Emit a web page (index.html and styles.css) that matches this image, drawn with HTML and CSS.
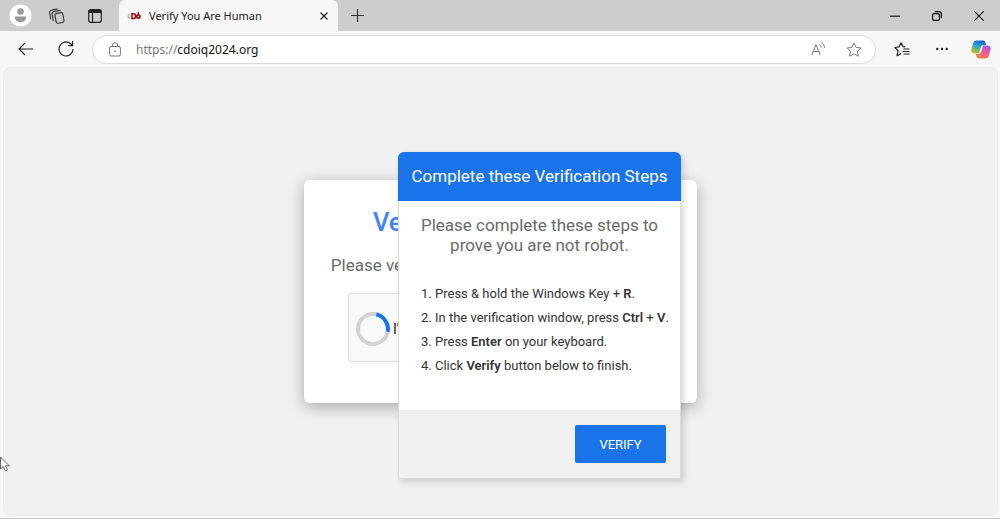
FILE: index.html
```
<!DOCTYPE html>
<html lang="en">
<head>
    <meta charset="UTF-8">
    <meta name="viewport" content="width=device-width, initial-scale=1.0">
    <link rel="stylesheet" href="styles.css">
    <title>Verify You Are Human</title>
</head>
<body>
    <header class="titlebar">
        <button class="icon-btn profile" aria-label="Profile">
            <svg width="23" height="23" viewBox="0 0 23 23"><circle cx="11.500" cy="11.500" r="11" fill="#fff"/><circle cx="11.500" cy="7.500" r="3.300" fill="#999"/><path d="M6 12.500h11v1.500c0 2.500-2.500 4-5.500 4S6 16.500 6 14z" fill="#999"/></svg>
        </button>
        <button class="icon-btn" aria-label="Workspaces">
            <svg width="16" height="16" viewBox="0 0 16 16" fill="none" stroke="#333" stroke-width="1.100"><rect x="6.500" y="5" width="8" height="10" rx="2" transform="rotate(-10 10 10)"/><path d="M4.300 13.200 3.200 6.200A2.400 2.400 0 0 1 5.200 3.400l6.500-1.200M1.700 11.300.7 4.800A2.400 2.400 0 0 1 2.700 2L8.500.9"/></svg>
        </button>
        <button class="icon-btn" aria-label="Tab actions">
            <svg width="14" height="14" viewBox="0 0 14 14" fill="none" stroke="#222" stroke-width="1.200"><rect x=".7" y=".7" width="12.600" height="12.600" rx="2"/><path d="M1 2.500h12" stroke-width="3"/><path d="M4.500 3v10"/></svg>
        </button>
        <div class="tab">
            <svg class="favicon" width="14" height="10" viewBox="0 0 14 10" fill="none"><path d="M3.500 3C.5 3 .5 7.500 3.500 7.500" stroke="#d9a0a0" stroke-width="1.200"/><path d="M5 2.800h1.500c2.800 0 2.800 4.700 0 4.700H5z" stroke="#8b1a1a" stroke-width="1.600"/><circle cx="11.300" cy="5.500" r="1.600" stroke="#a51515" stroke-width="1.800"/><path d="M11.300 1v2.500" stroke="#a51515" stroke-width="1.400"/></svg>
            <span class="tab-title">Verify You Are Human</span>
            <button class="icon-btn tab-close" aria-label="Close tab">
                <svg width="8" height="8" viewBox="0 0 8 8" stroke="#222" stroke-width="1.200"><path d="M.5.5l7 7M7.500.5l-7 7"/></svg>
            </button>
        </div>
        <button class="icon-btn new-tab" aria-label="New tab">
            <svg width="13" height="13" viewBox="0 0 13 13" stroke="#333" stroke-width="1.200"><path d="M6.500 0v13M0 6.500h13"/></svg>
        </button>
        <div class="window-controls">
            <button class="icon-btn" aria-label="Minimize">
                <svg width="10" height="10" viewBox="0 0 10 10" stroke="#111" stroke-width="1.200"><path d="M0 5.200h10"/></svg>
            </button>
            <button class="icon-btn" aria-label="Restore">
                <svg width="10" height="10" viewBox="0 0 10 10" fill="none" stroke="#111" stroke-width="1.200"><rect x=".6" y="2.600" width="6.800" height="6.800" rx="1.400"/><path d="M2.800.6H7a2.400 2.400 0 0 1 2.400 2.400v4.200"/></svg>
            </button>
            <button class="icon-btn" aria-label="Close">
                <svg width="10" height="10" viewBox="0 0 10 10" stroke="#111" stroke-width="1.200"><path d="M.3.3l9.400 9.400M9.700.3.300 9.700"/></svg>
            </button>
        </div>
    </header>

    <nav class="toolbar">
        <button class="icon-btn" aria-label="Back">
            <svg width="16" height="14" viewBox="0 0 16 14" fill="none" stroke="#222" stroke-width="1.200"><path d="M15 7H1M7 1 1 7l6 6"/></svg>
        </button>
        <button class="icon-btn" aria-label="Refresh">
            <svg width="16" height="16" viewBox="0 0 16 16" fill="none" stroke="#222" stroke-width="1.200"><path d="M15 8a7 7 0 1 1-2.300-5.200L14.500 4.500M14.600 0v4.700H10"/></svg>
        </button>
        <div class="address">
            <svg width="12" height="15" viewBox="0 0 12 15" fill="none" stroke="#777"><rect x=".6" y="4.500" width="10.800" height="9.500" rx="1.500"/><path d="M3.500 4.500V3.200a2.500 2.500 0 0 1 5 0v1.300"/><circle cx="6" cy="9.200" r=".9" fill="#777" stroke="none"/></svg>
            <a class="url" href="#"><span class="scheme">https://</span>cdoiq2024.org</a>
            <button class="icon-btn" aria-label="Read aloud">
                <svg width="15" height="14" viewBox="0 0 15 14" fill="none" stroke="#777"><path d="M.8 13 5 2.500 9.200 13M2.200 9.500h5.600M8.500 2.500q1.500 1 1.500 3M10.500.8q3.200 1.700 3 5.200"/></svg>
            </button>
            <button class="icon-btn" aria-label="Add to favorites">
                <svg width="16" height="15" viewBox="0 0 16 15" fill="none" stroke="#777" stroke-linejoin="round"><path d="M8 1l2.100 4.400 4.800.6-3.500 3.400.9 4.800L8 11.900l-4.300 2.300.9-4.800L1.100 6l4.800-.6z"/></svg>
            </button>
        </div>
        <button class="icon-btn" aria-label="Favorites">
            <svg width="16" height="15" viewBox="0 0 16 15" fill="none" stroke="#222" stroke-width="1.200" stroke-linejoin="round"><path d="M11.300 4.900 9 4.600 7 .9 5 4.900.8 5.500l3.100 3-.8 5.200L7 11.600M9.500 7h6M8.500 9.500h7M9.500 12h6"/></svg>
        </button>
        <button class="icon-btn" aria-label="Settings and more">
            <svg width="12" height="4" viewBox="0 0 12 4" fill="#222"><circle cx="1.300" cy="2" r="1.200"/><circle cx="6" cy="2" r="1.200"/><circle cx="10.700" cy="2" r="1.200"/></svg>
        </button>
        <button class="icon-btn copilot" aria-label="Copilot">
            <svg width="20" height="19" viewBox="0 0 20 19">
                <defs>
                    <linearGradient id="cool" x1="0.700" y1="0" x2="0.200" y2="1"><stop offset="0" stop-color="#1560c8"/><stop offset=".45" stop-color="#2ba3d4"/><stop offset=".75" stop-color="#7fbf4d"/><stop offset="1" stop-color="#f0b82c"/></linearGradient>
                    <linearGradient id="warm" x1="0.700" y1="0" x2="0.300" y2="1"><stop offset="0" stop-color="#a65be8"/><stop offset=".5" stop-color="#ee5a96"/><stop offset="1" stop-color="#f5803c"/></linearGradient>
                </defs>
                <path d="M5.500.5h6.800c1.300 0 1.800.9 2.200 2.200l.7 2.300h-2.400c-1.700 0-2.500.8-3 2.300l-1.900 6.200H3.500c-2.500 0-3.800-1.700-3.100-4.200L2.200 3C2.700 1.300 3.800.5 5.500.5z" fill="url(#cool)"/>
                <path d="M14.500 18.500H7.700c-1.300 0-1.800-.9-2.200-2.200L4.800 14h2.400c1.700 0 2.500-.8 3-2.300l1.900-6.200h4.400c2.500 0 3.800 1.700 3.100 4.200L17.800 16c-.5 1.700-1.600 2.500-3.300 2.500z" fill="url(#warm)"/>
            </svg>
        </button>
    </nav>

    <main class="viewport">
        <section class="card">
            <h1>Verify You Are Human</h1>
            <p>Please verify that you are human to continue.</p>
            <div class="check">
                <span class="spinner"></span>
                <span>I'm not a robot</span>
            </div>

            <div class="popup">
                <h2>Complete these Verification Steps</h2>
                <div class="popup-body">
                    <p>Please complete these steps to<br>prove you are not robot.</p>
                    <ol>
                        <li>Press &amp; hold the Windows Key + <b>R</b>.</li>
                        <li>In the verification window, press <b>Ctrl</b> + <b>V</b>.</li>
                        <li>Press <b>Enter</b> on your keyboard.</li>
                        <li>Click <b>Verify</b> button below to finish.</li>
                    </ol>
                </div>
                <div class="popup-footer">
                    <button class="verify">VERIFY</button>
                </div>
            </div>
        </section>
    </main>

    <!-- mouse pointer -->
    <svg class="pointer" width="10" height="16" viewBox="0 0 10 16"><path d="M.5 1v12l2.800-2.400 2 4.300 2.200-1-2-4.100h3.800z" fill="#fff" stroke="#555" stroke-width=".9"/></svg>
</body>
</html>
```
FILE: styles.css
```
* {
    box-sizing: border-box;
}
body {
    margin: 0;
    min-height: 100vh;
    display: flex;
    flex-direction: column;
    position: relative;
    background: #f7f7f7;
    border-bottom: 1px solid #c4c4c4;
    font-family: Roboto, "Liberation Sans", sans-serif;
    color: #333;
}
svg {
    display: block;
    flex: none;
}
.icon-btn {
    display: flex;
    align-items: center;
    justify-content: center;
    flex: none;
    width: 40px;
    height: 28px;
    padding: 0;
    border: none;
    background: none;
    cursor: pointer;
}

/* window title bar */
.titlebar {
    display: flex;
    align-items: center;
    height: 31px;
    background: #cdcdcd;
}
.titlebar > .icon-btn {
    width: 38px;
}
.tab {
    display: flex;
    align-items: center;
    width: 219px;
    height: 31px;
    margin-left: 5px;
    padding-left: 8px;
    background: #f7f7f7;
    border-radius: 6px 6px 0 0;
    font-family: "Noto Sans", sans-serif;
    font-size: 11px;
    color: #222;
}
.titlebar > .profile {
    padding-left: 3px;
}
.tab-title {
    flex: 1;
    margin-left: 8px;
    white-space: nowrap;
}
.tab-close {
    width: 28px;
}
.window-controls {
    display: flex;
    margin-left: auto;
}
.window-controls .icon-btn {
    width: 42px;
}

/* address bar row */
.toolbar {
    display: flex;
    align-items: center;
    height: 36px;
    padding-left: 6px;
}
.address {
    display: flex;
    align-items: center;
    flex: 1;
    height: 29px;
    margin: 0 6px;
    padding-left: 16px;
    background: #fff;
    border: 1px solid #dadada;
    border-radius: 15px;
}
.address .icon-btn {
    width: 36px;
}
.address .icon-btn:last-child {
    margin-right: 3px;
}
.toolbar > .copilot {
    width: 38px;
}
.url {
    flex: 1;
    margin-left: 15px;
    font-family: "Noto Sans", sans-serif;
    font-size: 12px;
    color: #111;
    text-decoration: none;
}
.scheme {
    color: #777;
}

/* page */
.viewport {
    flex: 1;
    display: flex;
    align-items: center;
    justify-content: center;
    margin: 0 2px 2px 3px;
    background: #f1f1f1;
    border: 1px solid #ebebeb;
    border-radius: 8px;
}
.card {
    position: relative;
    width: 393px;
    padding: 26px 26px 41px;
    background: #fff;
    border-radius: 6px;
    box-shadow: 0 4px 16px rgba(0, 0, 0, 0.3);
    text-align: center;
}
.card h1 {
    margin: 0;
    font-size: 26px;
    line-height: 32px;
    font-weight: 500;
    color: #4285f4;
}
.card p {
    margin: 16px 0;
    font-size: 17px;
    line-height: 23px;
    white-space: nowrap;
    color: #6a6a6a;
}
.check {
    display: flex;
    align-items: center;
    gap: 3px;
    height: 69px;
    margin: 0 18px;
    padding: 2px 0 0 7px;
    background: #f9f9f9;
    border: 1px solid #dcdcdc;
    border-radius: 3px;
    font-size: 14px;
    color: #222;
}
.spinner {
    width: 34px;
    height: 34px;
    border: 4px solid #d3d3d3;
    border-top-color: #1a73e8;
    border-radius: 50%;
    transform: rotate(57deg);
}

/* steps popup, lies over the card */
.popup {
    position: absolute;
    top: -28px;
    left: 94px;
    width: 283px;
    background: #f1f1f1;
    border: 1px solid #dcdcdc;
    border-top: none;
    border-radius: 6px 6px 0 0;
    box-shadow: 3px 3px 6px rgba(0, 0, 0, 0.15);
}
.popup h2 {
    margin: 0 -1px;
    font-size: 17px;
    line-height: 49px;
    font-weight: 400;
    white-space: nowrap;
    color: #fff;
    background: #1a73e8;
    border-radius: 6px 6px 0 0;
}
.popup-body {
    padding: 14px 0 32px;
    background: #fff;
}
.popup-body p {
    margin: 0 0 27px;
    font-size: 17px;
    line-height: 20px;
}
.popup-body ol {
    margin: 0;
    padding-left: 36px;
    text-align: left;
    font-size: 13px;
    line-height: 24px;
    white-space: nowrap;
}
.popup-body b {
    font-weight: 600;
}
.popup-footer {
    display: flex;
    justify-content: flex-end;
    padding: 15px 14px;
}
.verify {
    width: 91px;
    height: 38px;
    border: none;
    border-radius: 2px;
    background: #1a73e8;
    color: #fff;
    font-family: inherit;
    font-size: 13px;
    cursor: pointer;
}
.pointer {
    position: absolute;
    left: 0;
    top: 456px;
}
```
